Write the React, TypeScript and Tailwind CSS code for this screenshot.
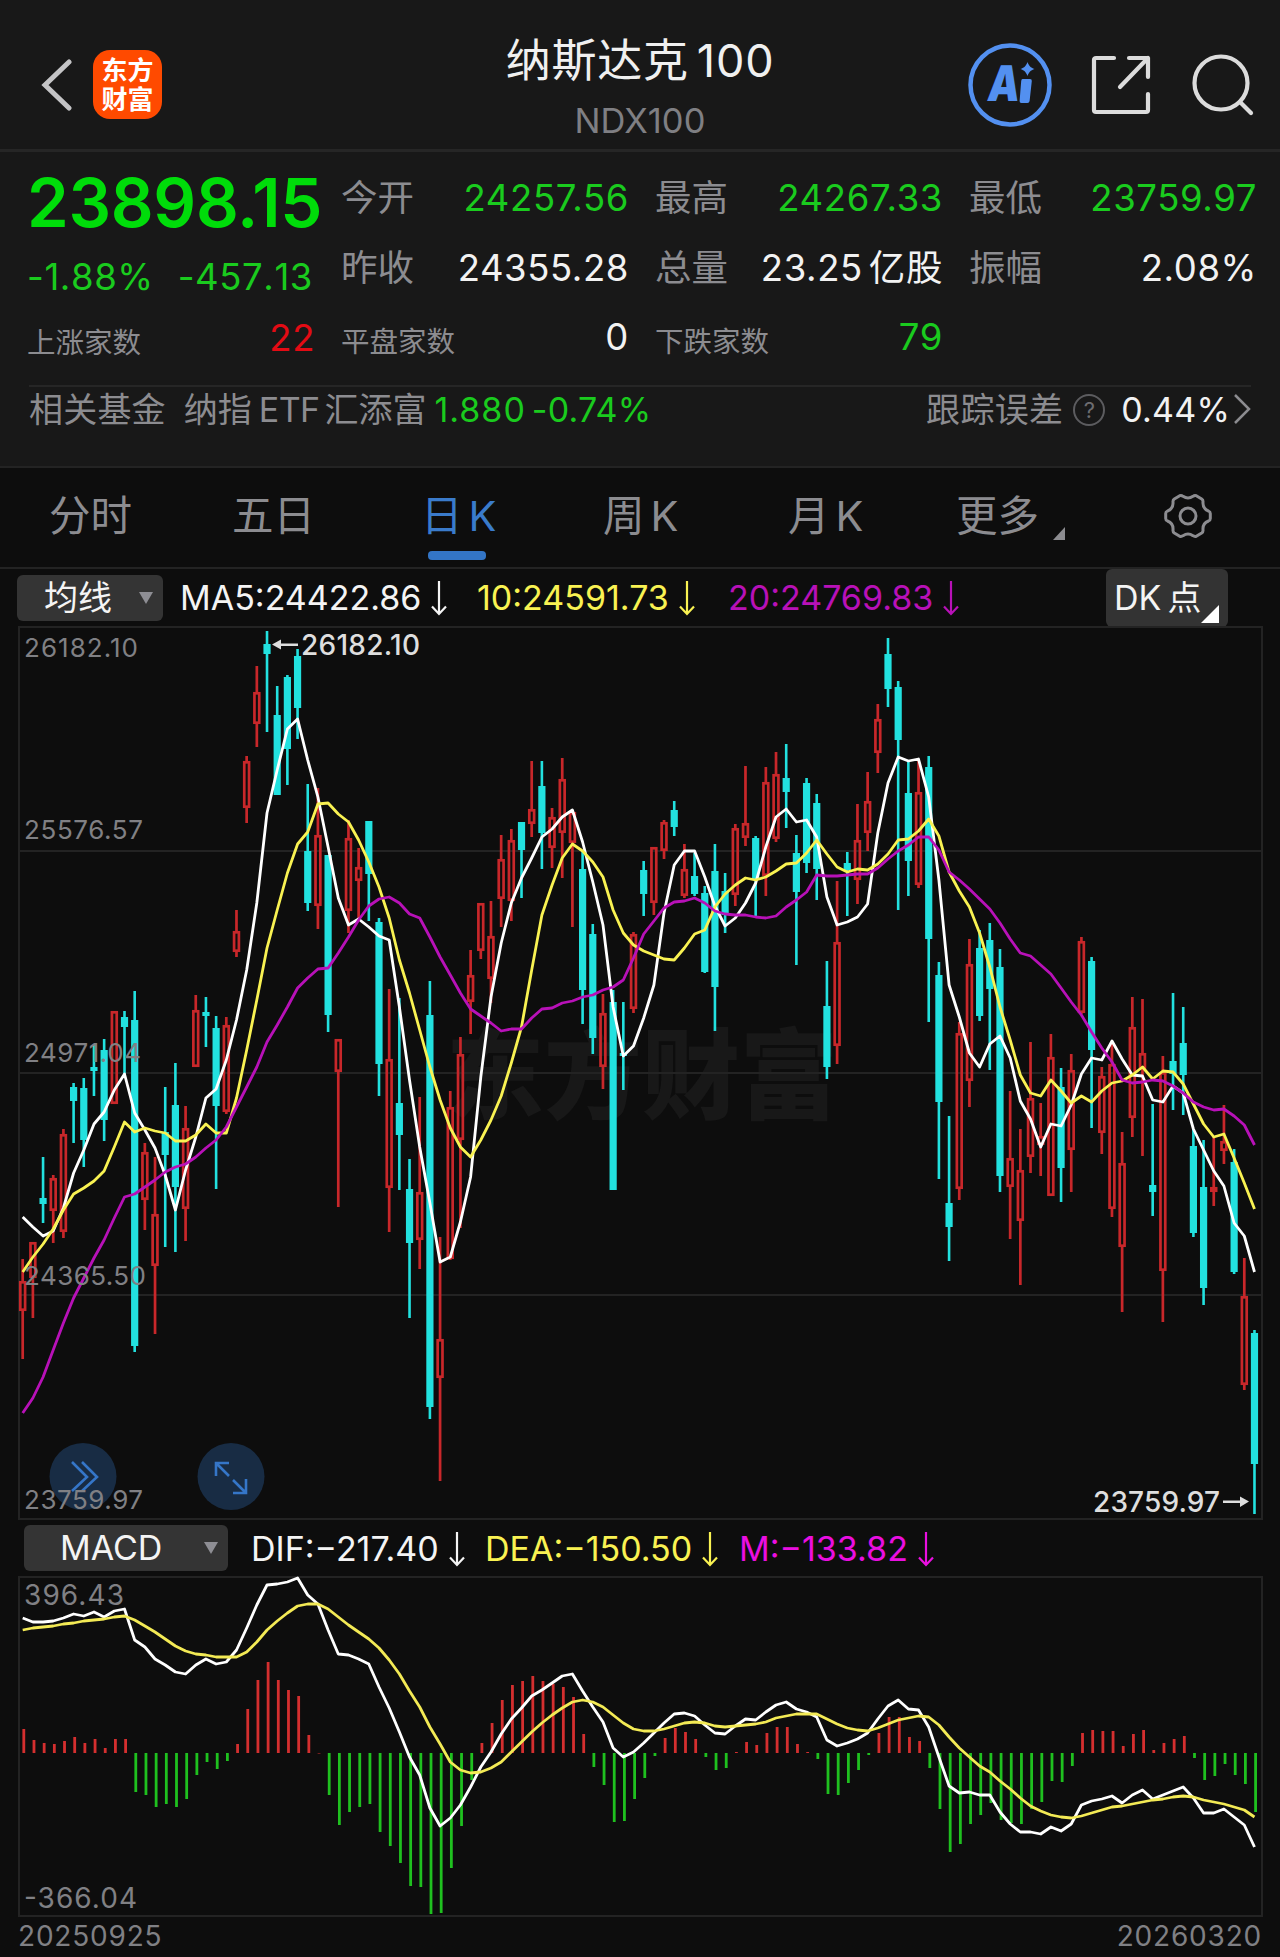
import type { ReactNode } from "react";

type Candle = [up: 0 | 1, high: number, top: number, bottom: number, low: number];

const STEP = 10.18;
const FIRST_X = 22.7;
const MACD_ZERO = 1753;

// y coordinates, one candle per trading day
const candles: Candle[] = [
  [1, 1259, 1281, 1311, 1359], [1, 1242, 1242, 1278, 1318], [0, 1157, 1198, 1204, 1223], [1, 1175, 1178, 1211, 1243],
  [1, 1129, 1134, 1232, 1238], [0, 1083, 1087, 1101, 1143], [0, 1078, 1088, 1140, 1167], [0, 1045, 1067, 1071, 1096],
  [0, 1039, 1050, 1120, 1141], [1, 1011, 1011, 1104, 1104], [0, 1011, 1017, 1027, 1075], [0, 991, 1020, 1346, 1352],
  [1, 1143, 1152, 1200, 1230], [1, 1157, 1214, 1266, 1334], [0, 1087, 1132, 1155, 1247], [0, 1063, 1105, 1187, 1252],
  [1, 1106, 1128, 1209, 1241], [1, 995, 1010, 1067, 1067], [0, 997, 1012, 1016, 1047], [0, 1016, 1028, 1106, 1189],
  [1, 1017, 1025, 1112, 1114], [1, 910, 931, 952, 957], [1, 756, 761, 808, 823], [1, 666, 692, 724, 747],
  [0, 631, 644, 654, 732], [0, 686, 715, 795, 795], [0, 675, 677, 749, 785], [0, 649, 656, 708, 739],
  [0, 784, 851, 903, 911], [1, 788, 835, 906, 929], [0, 855, 855, 1015, 1032], [1, 1039, 1039, 1072, 1207],
  [1, 820, 838, 911, 933], [1, 848, 867, 881, 920], [0, 821, 821, 874, 921], [0, 918, 922, 1064, 1096],
  [1, 989, 1059, 1188, 1232], [0, 998, 1103, 1135, 1190], [0, 1159, 1189, 1243, 1318], [1, 1097, 1192, 1240, 1269],
  [0, 981, 1015, 1407, 1419], [1, 1237, 1339, 1378, 1481], [1, 1091, 1107, 1259, 1260], [1, 1037, 1054, 1140, 1228],
  [1, 950, 975, 1002, 1034], [1, 903, 903, 951, 959], [1, 901, 936, 979, 1003], [1, 835, 859, 899, 927],
  [1, 829, 840, 901, 921], [0, 822, 822, 850, 898], [1, 761, 809, 824, 837], [0, 761, 786, 833, 869],
  [1, 808, 817, 848, 868], [1, 758, 779, 833, 878], [1, 810, 812, 843, 927], [0, 850, 869, 990, 1024],
  [0, 924, 934, 1038, 1054], [1, 994, 1013, 1067, 1089], [0, 990, 1002, 1190, 1190], [0, 1002, 1053, 1056, 1090],
  [1, 932, 934, 1009, 1013], [0, 861, 870, 894, 916], [1, 847, 847, 903, 915], [1, 820, 822, 851, 859],
  [0, 801, 810, 827, 836], [1, 844, 869, 896, 898], [0, 853, 876, 894, 896], [0, 886, 893, 972, 973],
  [0, 844, 871, 987, 1031], [0, 873, 891, 915, 933], [1, 824, 828, 895, 906], [1, 766, 823, 838, 846],
  [0, 836, 838, 880, 916], [1, 767, 782, 876, 896], [1, 752, 774, 839, 842], [0, 744, 778, 792, 828],
  [0, 835, 853, 892, 965], [0, 778, 783, 863, 873], [0, 794, 803, 869, 900], [0, 961, 1006, 1067, 1079],
  [1, 881, 942, 1046, 1064], [0, 852, 863, 870, 916], [1, 804, 840, 880, 904], [1, 772, 801, 833, 851],
  [1, 704, 719, 753, 773], [0, 638, 654, 689, 707], [0, 681, 687, 740, 910], [0, 762, 793, 861, 896],
  [1, 760, 792, 885, 888], [0, 756, 767, 939, 1022], [0, 962, 975, 1102, 1179], [0, 1116, 1203, 1227, 1261],
  [1, 1022, 1033, 1189, 1200], [1, 939, 964, 1081, 1107], [0, 930, 948, 1016, 1021], [0, 923, 940, 989, 1070],
  [0, 949, 967, 1176, 1192], [1, 1091, 1158, 1187, 1239], [1, 1129, 1170, 1221, 1285], [1, 1042, 1098, 1157, 1173],
  [1, 1103, 1136, 1145, 1176], [1, 1034, 1057, 1196, 1196], [0, 1068, 1087, 1168, 1202], [1, 1054, 1070, 1150, 1192],
  [1, 937, 941, 1013, 1014], [0, 957, 961, 1050, 1128], [1, 1067, 1076, 1133, 1154], [1, 1042, 1064, 1209, 1217],
  [1, 1132, 1163, 1247, 1312], [1, 997, 1027, 1118, 1137], [1, 999, 1053, 1069, 1156], [0, 1104, 1185, 1192, 1216],
  [1, 1056, 1072, 1271, 1322], [0, 993, 1061, 1074, 1110], [0, 1007, 1043, 1075, 1115], [0, 1129, 1146, 1233, 1237],
  [0, 1140, 1187, 1288, 1305], [1, 1136, 1187, 1192, 1206], [1, 1105, 1141, 1151, 1164], [0, 1149, 1162, 1272, 1274],
  [1, 1258, 1296, 1385, 1390], [0, 1330, 1333, 1464, 1514],
];

const ma5 = [
  1217, 1227, 1236, 1231, 1208, 1173, 1150, 1124, 1112, 1090, 1074, 1113, 1130, 1148, 1175, 1210, 1170, 1137, 1098, 1089,
  1060, 1020, 970, 903, 813, 770, 729, 719, 760, 797, 847, 898, 925, 919, 927, 936, 940, 1007, 1080, 1147,
  1203, 1262, 1257, 1222, 1177, 1077, 997, 943, 903, 878, 858, 837, 829, 817, 810, 842, 882, 925, 1007, 1056,
  1046, 1018, 985, 913, 865, 851, 851, 877, 906, 926, 918, 903, 883, 847, 817, 809, 822, 820, 837, 897,
  925, 922, 917, 904, 833, 783, 757, 761, 759, 797, 880, 985, 1017, 1053, 1067, 1044, 1036, 1058, 1101, 1119,
  1147, 1124, 1126, 1105, 1074, 1058, 1060, 1041, 1059, 1075, 1076, 1100, 1102, 1086, 1093, 1129, 1150, 1171, 1186, 1223,
  1236, 1272,
];

const ma10 = [
  1272, 1257, 1244, 1229, 1210, 1194, 1188, 1181, 1171, 1147, 1122, 1132, 1128, 1131, 1133, 1141, 1141, 1135, 1124, 1133,
  1133, 1098, 1050, 1000, 948, 910, 873, 844, 832, 804, 803, 814, 822, 840, 862, 887, 918, 960, 993, 1030,
  1067, 1100, 1128, 1147, 1157, 1140, 1120, 1096, 1063, 1027, 970, 915, 885, 858, 844, 851, 862, 877, 910, 933,
  945, 951, 955, 959, 960, 948, 934, 930, 907, 894, 885, 878, 880, 877, 871, 864, 863, 853, 840, 854,
  867, 872, 869, 870, 864, 854, 840, 839, 831, 819, 836, 872, 891, 907, 933, 967, 1007, 1040, 1075, 1093,
  1096, 1080, 1091, 1103, 1096, 1102, 1091, 1083, 1081, 1075, 1067, 1079, 1071, 1072, 1084, 1104, 1124, 1137, 1134, 1158,
  1183, 1209,
];

const ma20 = [
  1413, 1398, 1377, 1350, 1323, 1298, 1278, 1258, 1240, 1218, 1197, 1194, 1187, 1180, 1172, 1167, 1164, 1157, 1148, 1140,
  1127, 1107, 1087, 1067, 1042, 1025, 1007, 988, 978, 969, 968, 953, 937, 920, 906, 899, 897, 903, 914, 918,
  937, 957, 975, 993, 1009, 1016, 1023, 1031, 1029, 1029, 1018, 1009, 1008, 1003, 1001, 997, 995, 990, 987, 980,
  958, 934, 921, 908, 902, 901, 898, 903, 911, 914, 915, 915, 917, 918, 916, 907, 900, 892, 875, 876,
  876, 875, 874, 874, 868, 859, 851, 845, 837, 837, 850, 872, 880, 889, 899, 909, 923, 939, 953, 956,
  965, 974, 988, 1002, 1015, 1032, 1048, 1062, 1080, 1083, 1082, 1080, 1081, 1086, 1093, 1102, 1107, 1110, 1109, 1116,
  1125, 1145,
];

const macdBars = [
  1729, 1740, 1743, 1744, 1741, 1737, 1743, 1739, 1748, 1739, 1739, 1792, 1795, 1807, 1804, 1807, 1799, 1775, 1762, 1769,
  1761, 1744, 1709, 1680, 1662, 1680, 1690, 1696, 1735, 1753, 1795, 1825, 1812, 1807, 1804, 1832, 1846, 1863, 1886, 1887,
  1914, 1913, 1868, 1826, 1780, 1743, 1723, 1700, 1685, 1681, 1676, 1681, 1684, 1687, 1697, 1734, 1767, 1785, 1822, 1821,
  1799, 1778, 1756, 1738, 1728, 1732, 1739, 1757, 1770, 1768, 1752, 1742, 1745, 1733, 1727, 1727, 1744, 1752, 1759, 1794,
  1795, 1783, 1770, 1755, 1733, 1717, 1717, 1737, 1741, 1768, 1809, 1852, 1844, 1824, 1815, 1803, 1820, 1823, 1824, 1809,
  1802, 1781, 1782, 1766, 1733, 1730, 1731, 1731, 1746, 1734, 1730, 1750, 1743, 1739, 1736, 1758, 1780, 1776, 1764, 1775,
  1784, 1812,
];

const dif = [
  1618, 1622, 1622, 1621, 1618, 1614, 1616, 1612, 1617, 1611, 1609, 1640, 1647, 1659, 1665, 1672, 1674, 1665, 1659, 1664,
  1662, 1650, 1628, 1605, 1585, 1584, 1582, 1578, 1595, 1604, 1630, 1654, 1655, 1659, 1664, 1687, 1708, 1732, 1757, 1775,
  1808, 1826, 1818, 1805, 1787, 1767, 1752, 1734, 1719, 1708, 1696, 1690, 1683, 1676, 1674, 1691, 1707, 1722, 1748, 1757,
  1752, 1743, 1733, 1723, 1714, 1713, 1716, 1725, 1733, 1734, 1726, 1719, 1720, 1712, 1705, 1702, 1709, 1712, 1717, 1740,
  1746, 1743, 1739, 1733, 1719, 1706, 1700, 1709, 1710, 1727, 1757, 1786, 1793, 1792, 1795, 1795, 1812, 1824, 1832, 1832,
  1834, 1827, 1831, 1824, 1805, 1801, 1799, 1796, 1803, 1795, 1790, 1799, 1795, 1791, 1787, 1798, 1813, 1813, 1809, 1817,
  1825, 1847,
];

const dea = [
  1630, 1628, 1627, 1626, 1624, 1623, 1621, 1620, 1619, 1617, 1616, 1620, 1626, 1632, 1639, 1646, 1651, 1654, 1655, 1657,
  1657, 1657, 1652, 1642, 1630, 1621, 1613, 1606, 1604, 1604, 1609, 1617, 1625, 1632, 1639, 1648, 1660, 1674, 1691, 1707,
  1727, 1744, 1762, 1770, 1773, 1772, 1768, 1762, 1752, 1742, 1732, 1723, 1715, 1708, 1702, 1700, 1702, 1707, 1715, 1723,
  1729, 1731, 1731, 1729, 1726, 1723, 1722, 1723, 1726, 1727, 1726, 1725, 1724, 1722, 1718, 1716, 1714, 1714, 1714, 1719,
  1724, 1728, 1730, 1731, 1728, 1724, 1720, 1718, 1716, 1717, 1725, 1737, 1748, 1757, 1766, 1772, 1781, 1789, 1798, 1806,
  1811, 1815, 1817, 1818, 1816, 1813, 1810, 1807, 1806, 1804, 1802, 1800, 1799, 1797, 1796, 1797, 1800, 1802, 1804, 1807,
  1810, 1817,
];

const xAt = (i: number) => FIRST_X + i * STEP;
const toPoints = (ys: number[]) => ys.map((y, i) => `${xAt(i).toFixed(1)},${y}`).join(" ");

function Line({ ys, color }: { ys: number[]; color: string }) {
  return <polyline points={toPoints(ys)} fill="none" stroke={color} strokeWidth="2.8" strokeLinejoin="round" />;
}

type LabelProps = { x: number; y: number; w: number; size?: number; children: string };

function AxisLabel({ x, y, w, size = 26, children }: LabelProps) {
  return (
    <text x={x} y={y} fontSize={size} textLength={w} fill="#808084">
      {children}
    </text>
  );
}

function DownArrow() {
  return (
    <svg viewBox="0 0 16 36" className="h-9 w-4 shrink-0" fill="none" stroke="currentColor" strokeWidth="2.2">
      <path d="M8 1v33M1 26.500l7 7.500 7-7.500" />
    </svg>
  );
}

type StatProps = { label: string; value: string; unit?: string; small?: boolean; tone?: string };

function Stat({ label, value, unit, small, tone = "text-[#f2f2f2]" }: StatProps) {
  return (
    <div className="flex h-[70px] items-center justify-between whitespace-nowrap">
      <span className={small ? "pt-2 text-[28.500px] text-[#8c8c90]" : "text-[36.500px] text-[#8c8c90]"}>{label}</span>
      <span className={`-mr-[2px] flex gap-1.5 text-[36.500px] tracking-[0.6px] ${small ? "-mt-[2px]" : ""} ${tone}`}>
        <span>{value}</span>
        {unit ? <span>{unit}</span> : null}
      </span>
    </div>
  );
}

function Header() {
  return (
    <header className="flex h-[152px] items-center justify-between border-b-[3px] border-[#262626] pr-[26px] pl-10">
      <div className="flex w-[288px] items-center gap-5 pt-[20px]">
        <svg viewBox="0 0 33 52" className="h-[52px] w-[33px]" fill="none" stroke="#c4c4c6" strokeWidth="5" strokeLinecap="round">
          <path d="M29 3 5 26l24 23" />
        </svg>
        <div className="grid h-[69px] w-[69px] place-content-center rounded-[17px] bg-[#ff4a00] text-center text-[26px] leading-[29px] font-bold text-white">
          <span>东方</span>
          <span>财富</span>
        </div>
      </div>
      <div className="flex flex-col items-center pt-[30px]">
        <h1 className="flex gap-2 text-[45px] leading-[62px] tracking-[0.8px] text-[#f0f0f0]">
          <span>纳斯达克</span>
          <span>100</span>
        </h1>
        <p className="text-[34.500px] leading-[58px] text-[#7f7f83]">NDX100</p>
      </div>
      <div className="flex w-[302px] items-center justify-end pt-[21px]">
        <svg viewBox="0 0 84 84" className="mr-[39px] h-[84px] w-[84px]" fill="#5390f0">
          <circle cx="42" cy="42" r="39.500" fill="none" stroke="#5390f0" strokeWidth="4.500" />
          <text x="19" y="58" fontSize="49" fontWeight="900" textLength="32" lengthAdjust="spacingAndGlyphs" transform="translate(6.500 0) skewX(-7)">
            A
          </text>
          <path d="M54.500 36h7.500q2 0 1.800 2l-2.200 20q-.3 2-2.200 2h-6q-2 0-1.800-2l1.600-20q.2-2 1.300-2z" />
          <path d="M59.500 19c1.500 4 3 5.500 7 7-4 1.500-5.500 3-7 7-1.500-4-3-5.500-7-7 4-1.500 5.500-3 7-7z" />
        </svg>
        <svg viewBox="0 0 60 60" className="mr-[41px] h-[60px] w-[60px]" fill="none" stroke="#dcdcdc" strokeWidth="4.200" strokeLinecap="round" strokeLinejoin="round">
          <path d="M23 3H5a2 2 0 0 0-2 2v50a2 2 0 0 0 2 2h50a2 2 0 0 0 2-2V39M38 3h19v19M57 3 29 32" />
        </svg>
        <svg viewBox="0 0 62 62" className="h-[62px] w-[62px]" fill="none" stroke="#dcdcdc" strokeWidth="4.200" strokeLinecap="round">
          <circle cx="29" cy="29" r="26.500" />
          <path d="m48 48 11 11" />
        </svg>
      </div>
    </header>
  );
}

function Quote() {
  return (
    <section className="h-[233px] px-[27px] pt-[11px]">
      <div className="grid grid-cols-[286px_286px_286px_286px] gap-x-[28px]">
        <div>
          <div className="h-[80px] text-[67px] leading-[80px] font-semibold tracking-[-0.3px] text-[#00dc0a]">23898.15</div>
          <div className="flex h-[61px] items-center justify-between pt-2 text-[36.500px] tracking-[0.6px] text-[#1acb1e] [font-kerning:none]">
            <span>-1.88%</span>
            <span>-457.13</span>
          </div>
          <Stat label="上涨家数" value="22" small tone="text-[#e30b14]" />
        </div>
        <div>
          <Stat label="今开" value="24257.56" tone="text-[#1acb1e]" />
          <Stat label="昨收" value="24355.28" />
          <Stat label="平盘家数" value="0" small />
        </div>
        <div>
          <Stat label="最高" value="24267.33" tone="text-[#1acb1e]" />
          <Stat label="总量" value="23.25" unit="亿股" />
          <Stat label="下跌家数" value="79" small tone="text-[#1acb1e]" />
        </div>
        <div>
          <Stat label="最低" value="23759.97" tone="text-[#1acb1e]" />
          <Stat label="振幅" value="2.08%" />
        </div>
      </div>
    </section>
  );
}

function RelatedFund() {
  return (
    <section className="mx-[29px] flex h-[81px] items-start border-t-2 border-[#262626] text-[34px] leading-[45px] whitespace-nowrap text-[#8c8c90]">
      <span className="tracking-[0.2px]">相关基金</span>
      <span className="ml-[18px] flex gap-[7px]">
        <span>纳指</span>
        <span className="tracking-[-0.6px]">ETF</span>
        <span className="-ml-0.5">汇添富</span>
      </span>
      <span className="ml-2 tracking-[1px] text-[#1acb1e]">1.880</span>
      <span className="ml-1.5 tracking-[0.2px] text-[#1acb1e]">-0.74%</span>
      <span className="ml-auto tracking-[0.3px]">跟踪误差</span>
      <span className="mt-[7px] ml-2.5 grid h-8 w-8 place-items-center rounded-full border-2 border-[#5c5c5f] text-[22px] leading-none text-[#6c6c70]">?</span>
      <span className="ml-4 tracking-[0.2px] text-[#f2f2f2]">0.44%</span>
      <svg viewBox="0 0 18 32" className="mt-[6px] ml-[3px] h-8 w-[18px]" fill="none" stroke="#8c8c90" strokeWidth="2.500">
        <path d="m2 2 14 14L2 30" />
      </svg>
    </section>
  );
}

function Tabs() {
  return (
    <nav className="relative flex h-[103px] items-center border-y-2 border-[#232323] bg-[#0d0d0d] pb-px text-[41.500px] leading-none whitespace-nowrap text-[#8c8c90]">
      <span className="ml-[49px] w-[183px]">分时</span>
      <span className="w-[189px]">五日</span>
      <span className="relative flex w-[182px] gap-1.5 text-[#3a7bcb]">
        <span>日</span>
        <span>K</span>
        <span className="absolute top-[55px] left-[7px] h-[9px] w-[58px] rounded-[4px] bg-[#3375c6]" />
      </span>
      <span className="flex w-[185px] gap-1.5">
        <span>周</span>
        <span>K</span>
      </span>
      <span className="flex w-[168px] gap-1.5">
        <span>月</span>
        <span>K</span>
      </span>
      <span className="flex w-[208px] items-end gap-3.5">
        更多
        <svg viewBox="0 0 12 13" className="-mb-0.5 h-[13px] w-3" fill="#8c8c90">
          <path d="M12 0v13H0z" />
        </svg>
      </span>
      <svg viewBox="0 0 48 48" className="-mt-0.5 h-12 w-12" fill="none" stroke="#8c8c90" strokeWidth="3" strokeLinejoin="round">
        <path d="M15.700 3.700q1.800-.6 3.300.6 5 3.400 10 0 1.500-1.200 3.300-.6l5.400 3.300q1.500 1 1.300 3c-.4 5 1.500 7.500 5.500 9q1.800.8 1.800 2.600v4.800q0 1.800-1.800 2.600c-4 1.500-5.900 4-5.500 9q.2 2-1.300 3l-5.400 3.300q-1.800.6-3.300-.6-5-3.400-10 0-1.500 1.200-3.300.6l-5.400-3.300q-1.500-1-1.300-3c.4-5-1.500-7.500-5.500-9q-1.800-.8-1.800-2.600v-4.800q0-1.800 1.800-2.600c4-1.500 5.900-4 5.500-9q-.2-2 1.300-3z" />
        <circle cx="24" cy="24" r="8" />
      </svg>
    </nav>
  );
}

function Picker({ className, children }: { className: string; children: ReactNode }) {
  return (
    <div className={`flex h-[46px] shrink-0 items-center justify-between rounded-md bg-[#343434] text-[#f4f4f4] ${className}`}>
      {children}
      <svg viewBox="0 0 14 12" className="h-3 w-3.5" fill="#8e8e94">
        <path d="M0 0h14L7 12z" />
      </svg>
    </div>
  );
}

function PriceChart() {
  return (
    <div className="relative ml-[18px] h-[894px] w-[1245px]">
      <svg viewBox="18 626 1245 894" className="h-[894px] w-[1245px]">
        <text x="446" y="1111" fontSize="98" fontWeight="900" fill="#181818">东方财富</text>
        <rect x="19" y="627" width="1243" height="892" fill="none" stroke="#232323" strokeWidth="2" />
        {[851, 1073, 1295].map((y) => (
          <path key={y} d={`M18 ${y}H1263`} stroke="#232323" strokeWidth="2" />
        ))}
        {candles.map(([up, high, top, bottom, low], i) => {
          const x = xAt(i);
          return up ? (
            <g key={i} stroke="#c8272a" strokeWidth="2.7" fill="none">
              <path d={`M${x} ${high}V${top}M${x} ${bottom}V${low}`} />
              <rect x={x - 2.4} y={top + 1.3} width="4.8" height={Math.max(bottom - top - 2.6, 1)} />
            </g>
          ) : (
            <g key={i} fill="#22e1df">
              <rect x={x - 1.3} y={high} width="2.6" height={low - high} />
              <rect x={x - 3.600} y={top} width="7.2" height={bottom - top} />
            </g>
          );
        })}
        <Line ys={ma5} color="#ffffff" />
        <Line ys={ma10} color="#f9f252" />
        <Line ys={ma20} color="#b811b8" />
        <circle cx="83" cy="1476.500" r="33.500" fill="#182c44" />
        <path d="m72 1462 15 15-15 14M82 1462l15 15-15 14" fill="none" stroke="#3576c8" strokeWidth="2.600" />
        <circle cx="231" cy="1476.500" r="33.500" fill="#182c44" />
        <path d="M216 1476v-13h13M216 1463l13 13M233 1480l13 13M246 1479v14h-13" fill="none" stroke="#3576c8" strokeWidth="2.600" />
        <AxisLabel x={24} y={657} w={114}>26182.10</AxisLabel>
        <AxisLabel x={24} y={839} w={119}>25576.57</AxisLabel>
        <AxisLabel x={24} y={1062} w={117}>24971.04</AxisLabel>
        <AxisLabel x={24} y={1285} w={122}>24365.50</AxisLabel>
        <AxisLabel x={24} y={1509} w={119}>23759.97</AxisLabel>
        <g fill="#dedede" fontSize="28" fontWeight="500">
          <text x="301" y="655" textLength="119">26182.10</text>
          <path d="M272 644.500l9-5v4h17v2.500h-17v3.500z" />
          <text x="1093" y="1512" textLength="127">23759.97</text>
          <path d="M1249 1501.500l-9-5v4h-17v2.500h17v4z" />
        </g>
      </svg>
    </div>
  );
}

function MacdChart() {
  return (
    <div className="ml-[18px] h-[342px] w-[1245px]">
      <svg viewBox="18 1576 1245 342" className="h-[342px] w-[1245px]">
        <rect x="19" y="1577" width="1243" height="339" fill="none" stroke="#232323" strokeWidth="2" />
        <AxisLabel x={24} y={1605} w={100} size={28}>396.43</AxisLabel>
        <AxisLabel x={24} y={1908} w={113} size={28}>-366.04</AxisLabel>
        {macdBars.map((y, i) => (
          <rect
            key={i}
            x={xAt(i) - 0.3}
            y={Math.min(y, MACD_ZERO)}
            width="2.800"
            height={Math.max(Math.abs(y - MACD_ZERO), 0.5)}
            fill={y > MACD_ZERO ? "#1fc01f" : "#d42f2f"}
          />
        ))}
        <Line ys={dif} color="#ffffff" />
        <Line ys={dea} color="#f3ea55" />
      </svg>
    </div>
  );
}

export default function App() {
  return (
    <div className="h-[1957px] w-[1280px] overflow-hidden bg-[#0d0d0d] font-['Inter','Noto_Sans_CJK_SC',sans-serif]">
      <div className="bg-[#181818]">
        <Header />
        <Quote />
        <RelatedFund />
      </div>
      <Tabs />
      <div className="flex h-[57px] items-center text-[34px] leading-none whitespace-nowrap">
        <Picker className="ml-[17px] w-[146px] pr-2.5 pl-[27px]">均线</Picker>
        <span className="mt-px ml-[17px] flex w-[297px] items-center gap-2.5 text-[#f4f4f4]">MA5:24422.86<DownArrow /></span>
        <span className="mt-px flex w-[251px] items-center gap-2.5 text-[#f9f252]">10:24591.73<DownArrow /></span>
        <span className="mt-px flex items-center gap-2.5 text-[#b811b8]">20:24769.83<DownArrow /></span>
        <span className="relative mr-[52px] ml-auto flex h-[58px] w-[122px] items-center gap-1.5 rounded-md bg-[#333333] pl-2 text-[#f4f4f4]">
          <span>DK</span>
          <span>点</span>
          <svg viewBox="0 0 18 18" className="absolute right-[9px] bottom-1 h-[18px] w-[18px]" fill="#ffffff">
            <path d="M18 0v18H0z" />
          </svg>
        </span>
      </div>
      <PriceChart />
      <div className="flex h-[56px] items-center pt-px text-[34px] leading-none whitespace-nowrap">
        <Picker className="-mt-px ml-6 w-[204px] pr-2.5 pl-9">MACD</Picker>
        <span className="ml-[23px] flex w-[234px] items-center gap-2.5 text-[#f4f4f4]">DIF:−217.40<DownArrow /></span>
        <span className="flex w-[254px] items-center gap-2.5 text-[#f9f252]">DEA:−150.50<DownArrow /></span>
        <span className="flex items-center gap-2.5 text-[#ea0fe0]">M:−133.82<DownArrow /></span>
      </div>
      <MacdChart />
      <div className="flex items-center justify-between pr-[18px] pl-[18px] text-[28px] leading-[36px] tracking-[0.8px] text-[#808084]">
        <span>20250925</span>
        <span>20260320</span>
      </div>
    </div>
  );
}
